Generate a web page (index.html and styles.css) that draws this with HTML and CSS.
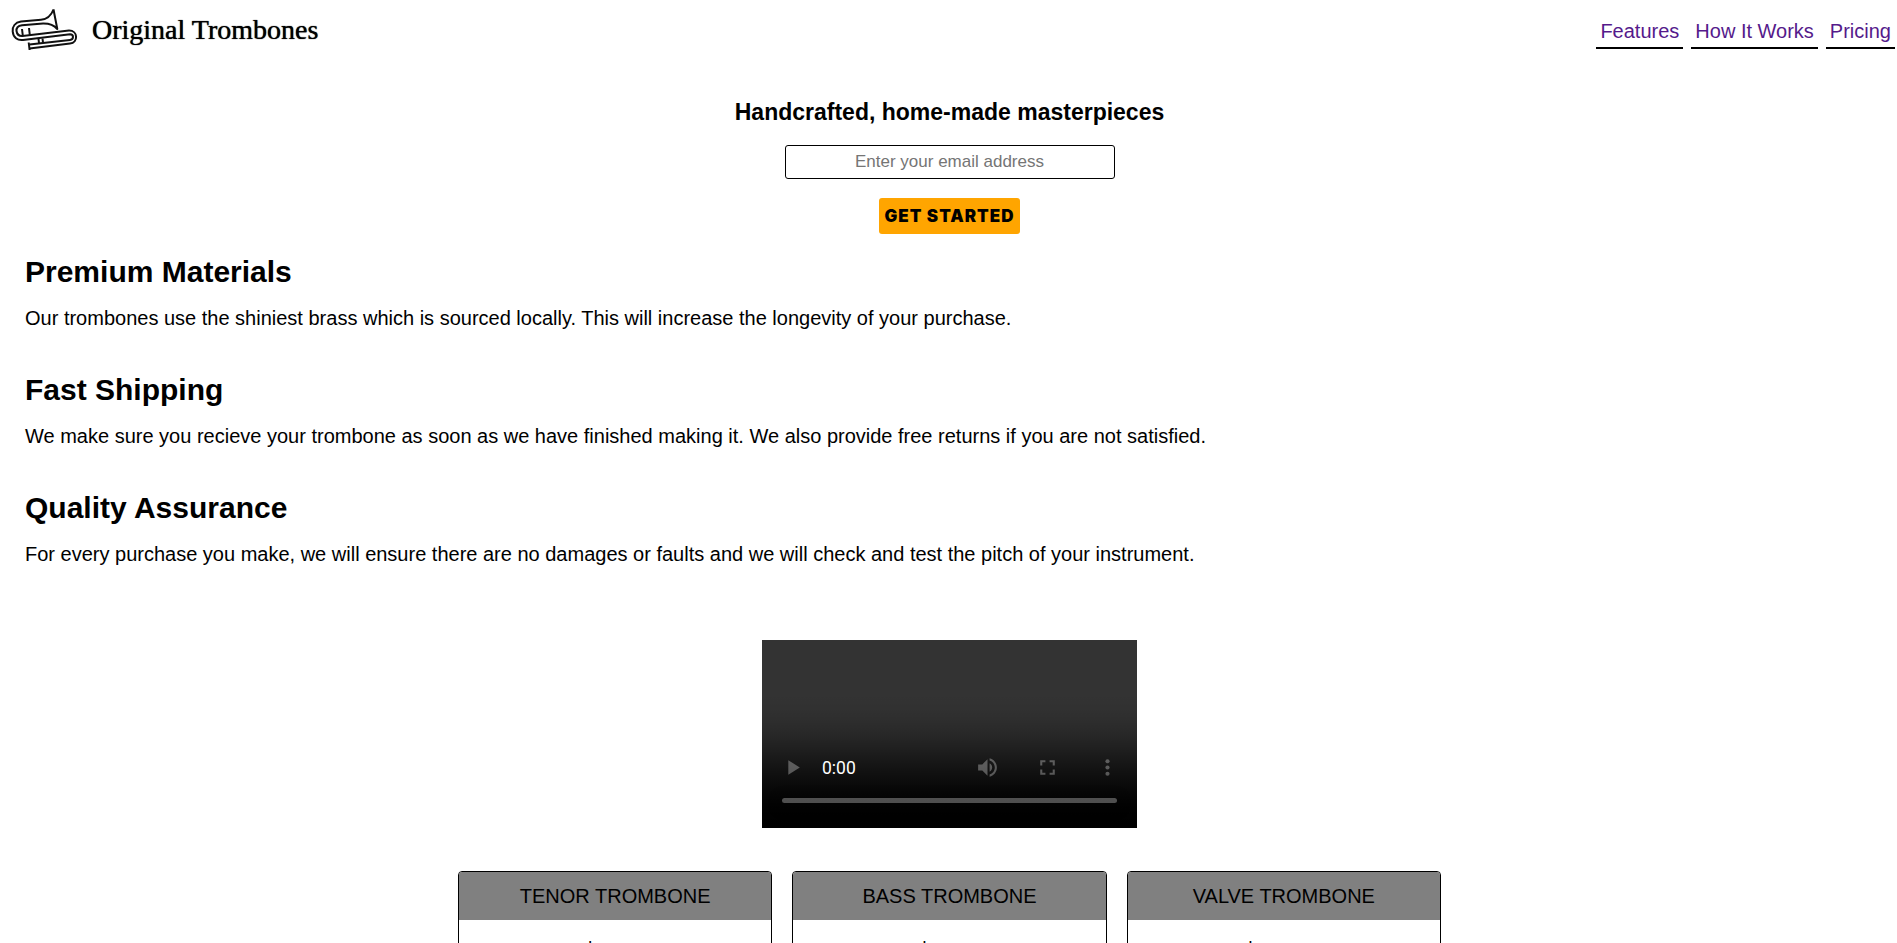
FILE: index.html
```html
<!DOCTYPE html>
<html lang="en">
<head>
<meta charset="utf-8">
<title>Original Trombones</title>
<link rel="stylesheet" href="styles.css">
</head>
<body>
<header class="header">
  <div class="brand">
    <svg class="brand-icon" viewBox="0 0 90 60" fill="none" stroke="#111" stroke-width="2" stroke-linejoin="round" aria-hidden="true">
      <path d="M53.500 9.500 L57.300 29 C54 25 49 23.400 43 23.500 L22 25.200 C18 25.800 16.200 28 16.500 31 C17 34.500 19 36.200 22.500 36 L69 30.600 C78 30.500 78.500 42.500 70 43.500 L29.500 48.400"/>
      <path d="M53.500 9.500 C51 16 47 19.300 41 19.800 L21 21.500 C15 22.500 12.200 26.500 12.700 31.500 C13.200 37.500 17.500 40.700 23 40 L70 34.300 C74 34.300 74 39.500 70 39.900 L29.500 44.500"/>
      <path d="M22 29 L22.800 35.500 M29 28 L29.800 35 M38.500 39 L39 43 M42.500 38.500 L43 42.500 M28.700 42.500 L29.600 50"/>
    </svg>
    <span class="brand-name">Original Trombones</span>
  </div>
  <nav class="nav">
    <a class="nav-link" href="#features">Features</a>
    <a class="nav-link" href="#how-it-works">How It Works</a>
    <a class="nav-link" href="#pricing">Pricing</a>
  </nav>
</header>
<main class="main">
  <form class="signup">
    <h2 class="signup-title">Handcrafted, home-made masterpieces</h2>
    <input class="email" type="email" placeholder="Enter your email address" aria-label="Email address">
    <button class="submit" type="button">GET STARTED</button>
  </form>
  <section class="features" id="features">
    <article class="feature">
      <h2 class="feature-title">Premium Materials</h2>
      <p class="feature-text">Our trombones use the shiniest brass which is sourced locally. This will increase the longevity of your purchase.</p>
    </article>
    <article class="feature">
      <h2 class="feature-title">Fast Shipping</h2>
      <p class="feature-text">We make sure you recieve your trombone as soon as we have finished making it. We also provide free returns if you are not satisfied.</p>
    </article>
    <article class="feature">
      <h2 class="feature-title">Quality Assurance</h2>
      <p class="feature-text">For every purchase you make, we will ensure there are no damages or faults and we will check and test the pitch of your instrument.</p>
    </article>
  </section>
  <section class="how" id="how-it-works">
    <video class="video" controls></video>
  </section>
  <section class="pricing" id="pricing">
    <article class="card"><h3 class="card-title">TENOR TROMBONE</h3><p class="price">$600</p></article>
    <article class="card"><h3 class="card-title">BASS TROMBONE</h3><p class="price">$900</p></article>
    <article class="card"><h3 class="card-title">VALVE TROMBONE</h3><p class="price">$1200</p></article>
  </section>
</main>
</body>
</html>
```
FILE: styles.css
```css
* { box-sizing: border-box; margin: 0; }
html { overflow: hidden; }
body { background: #fff; color: #000; font-family: "Liberation Sans", Arial, sans-serif; font-size: 20px; }
.header { display: flex; justify-content: space-between; align-items: center; height: 60px; padding-right: 2px; }
.brand { display: flex; align-items: center; gap: 2px; }
.brand-icon { width: 90px; height: 60px; }
.brand-name { font-family: "Liberation Serif", "Times New Roman", serif; font-size: 28px; color: #000; text-shadow: 0 0 1px #000; }
.nav { display: flex; gap: 8px; padding-top: 4px; }
.nav-link { padding: 4px; border-bottom: 2px solid #000; color: #551a8b; line-height: 24px; text-decoration: none; }
.main { padding-left: 2px; }
.signup { display: flex; flex-direction: column; align-items: center; padding-top: 39px; }
.signup-title { font-size: 23px; line-height: 27px; }
.email { width: 330px; height: 34px; margin-top: 19px; border: 1px solid #000; border-radius: 3px; font-family: inherit; font-size: 17px; text-align: center; }
.email::placeholder { color: #757575; }
.submit { height: 36px; margin-top: 19px; padding: 0 6px; border: 0; border-radius: 3px; background: orange; color: #000; font-family: "Arial Black", Inter, sans-serif; font-size: 17px; font-weight: 900; letter-spacing: 1px; }
.features { display: grid; gap: 42px; padding: 21px 23px 0; }
.feature-title { font-size: 30px; line-height: 34px; }
.feature-text { margin-top: 16px; line-height: 26px; }
.how { display: flex; justify-content: center; margin-top: 73px; }
.video { width: 300px; height: 150px; zoom: 1.25; }
.pricing { display: grid; grid-template-columns: repeat(3, 1fr); gap: 20px; max-width: 983px; margin: 43px auto 0; }
.card { overflow: hidden; border: 1px solid #000; border-radius: 4px; text-align: center; }
.card-title { background: gray; font-size: 20px; font-weight: 400; line-height: 48px; }
.price { padding: 16px 0 40px; font-size: 30px; font-weight: 700; line-height: 34px; }
```
